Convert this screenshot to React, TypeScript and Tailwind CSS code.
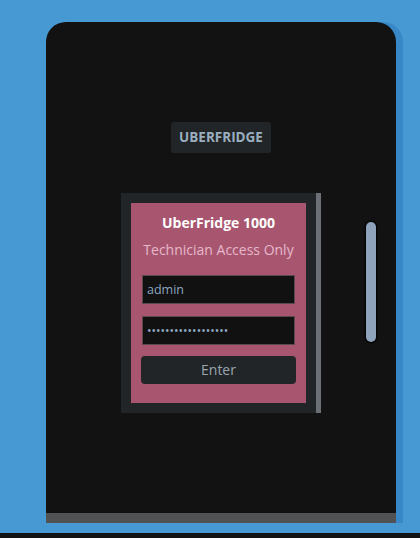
import { useState } from "react";

export default function App() {
  const [user, setUser] = useState("admin");
  const [pass, setPass] = useState("uberfridge-secret");

  return (
    <div className="flex h-[538px] w-full flex-col bg-[#4799d3] font-['Open_Sans',sans-serif]">
      {/* Page area */}
      <div className="flex-1 pl-[46px] pt-[22px]">
        {/* Fridge door */}
        <div className="relative flex h-[501px] w-[350px] flex-col items-center rounded-t-[20px] border-b-[10px] border-[#505254] bg-[#121212] shadow-[7px_0_0_0_#3888c7]">
          <div className="mt-[100px] flex h-[31px] w-[100px] items-center justify-center rounded-[3px] bg-[#222527] text-[13.5px] font-bold text-[#9aaebf]">
            UBERFRIDGE
          </div>

          {/* Screen */}
          <div className="mt-[40px] border-r-[5px] border-[#6b7076] bg-[#222527] p-[10px]">
            <div className="flex h-[200px] w-[175px] flex-col items-center bg-[#a8566f] px-[11px] pt-[10px]">
              <div className="text-[14px] font-bold leading-[20px] text-white">UberFridge 1000</div>
              <div className="mt-[7px] text-[14px] leading-[20px] text-[#e6b8cb]">Technician Access Only</div>

              <input
                value={user}
                onChange={(e) => setUser(e.target.value)}
                className="mt-[15px] h-[29px] w-full border border-[#5a4a50] bg-[#111111] px-[4px] text-[12.5px] text-[#8ea6c0] outline-none"
              />
              <input
                type="password"
                value={pass + "x"}
                onChange={(e) => setPass(e.target.value)}
                className="mt-[12px] h-[29px] w-full border border-[#5a4a50] bg-[#111111] px-[4px] text-[12px] text-[#8ea6c0] outline-none"
              />
              <button className="mt-[11px] h-[28px] w-[155px] rounded-[4px] bg-[#222527] text-[14px] leading-[26px] text-[#9aa5ae]">
                Enter
              </button>
            </div>
          </div>

          {/* Handle */}
          <div className="absolute left-[320px] top-[200px] h-[120px] w-[10px] rounded-full bg-[#8fa3bb] shadow-[0_0_2px_1px_#000]" />
        </div>
      </div>
      <div className="h-[10px]" />
      <div className="h-[5px] bg-[#121212]" />
    </div>
  );
}
